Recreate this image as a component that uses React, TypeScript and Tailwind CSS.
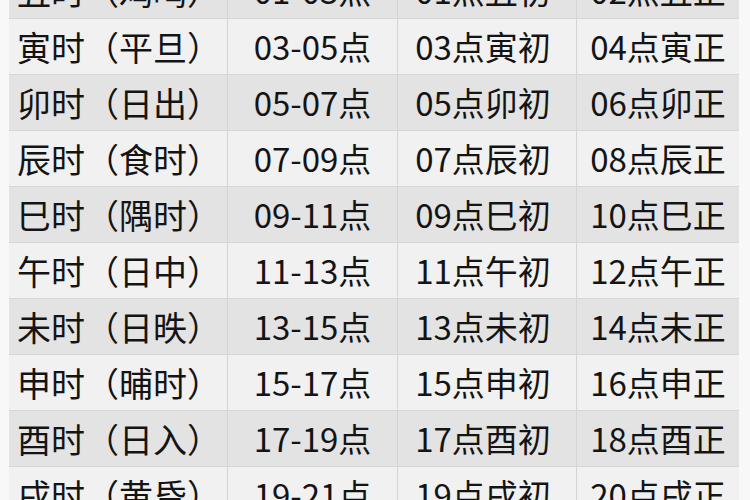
import React from "react";

const rows: [string, string, string, string][] = [
  ["丑时（鸡鸣）", "01-03点", "01点丑初", "02点丑正"],
  ["寅时（平旦）", "03-05点", "03点寅初", "04点寅正"],
  ["卯时（日出）", "05-07点", "05点卯初", "06点卯正"],
  ["辰时（食时）", "07-09点", "07点辰初", "08点辰正"],
  ["巳时（隅时）", "09-11点", "09点巳初", "10点巳正"],
  ["午时（日中）", "11-13点", "11点午初", "12点午正"],
  ["未时（日昳）", "13-15点", "13点未初", "14点未正"],
  ["申时（晡时）", "15-17点", "15点申初", "16点申正"],
  ["酉时（日入）", "17-19点", "17点酉初", "18点酉正"],
  ["戌时（黄昏）", "19-21点", "19点戌初", "20点戌正"],
];

export default function App() {
  return (
    <div
      className="w-[750px] h-[500px] overflow-hidden bg-[#f8f8f8] text-[#141414]"
      style={{ fontFamily: '"Noto Sans CJK SC", "Noto Sans", sans-serif' }}
    >
      <div className="ml-[9px] w-[730px] -mt-[37px] flex flex-col">
        {rows.map((r, i) => (
          <div
            key={i}
            className={`grid grid-cols-[219px_170px_179px_162px] h-[56px] border-b border-[#d6d6d6] ${
              i % 2 === 0 ? "bg-[#e3e3e3]" : "bg-[#f1f1f1]"
            }`}
          >
            <div className="flex items-center pl-[8px] text-[34px] leading-none border-r border-[#d4d4d4] whitespace-nowrap overflow-hidden">
              {r[0]}
            </div>
            <div className="flex items-center justify-center text-[33px] leading-none border-r border-[#d4d4d4] whitespace-nowrap">
              {r[1]}
            </div>
            <div className="flex items-center justify-center pr-[8px] text-[33px] leading-none border-r border-[#d4d4d4] whitespace-nowrap">
              {r[2]}
            </div>
            <div className="flex items-center justify-center text-[33px] leading-none whitespace-nowrap">
              {r[3]}
            </div>
          </div>
        ))}
      </div>
    </div>
  );
}
